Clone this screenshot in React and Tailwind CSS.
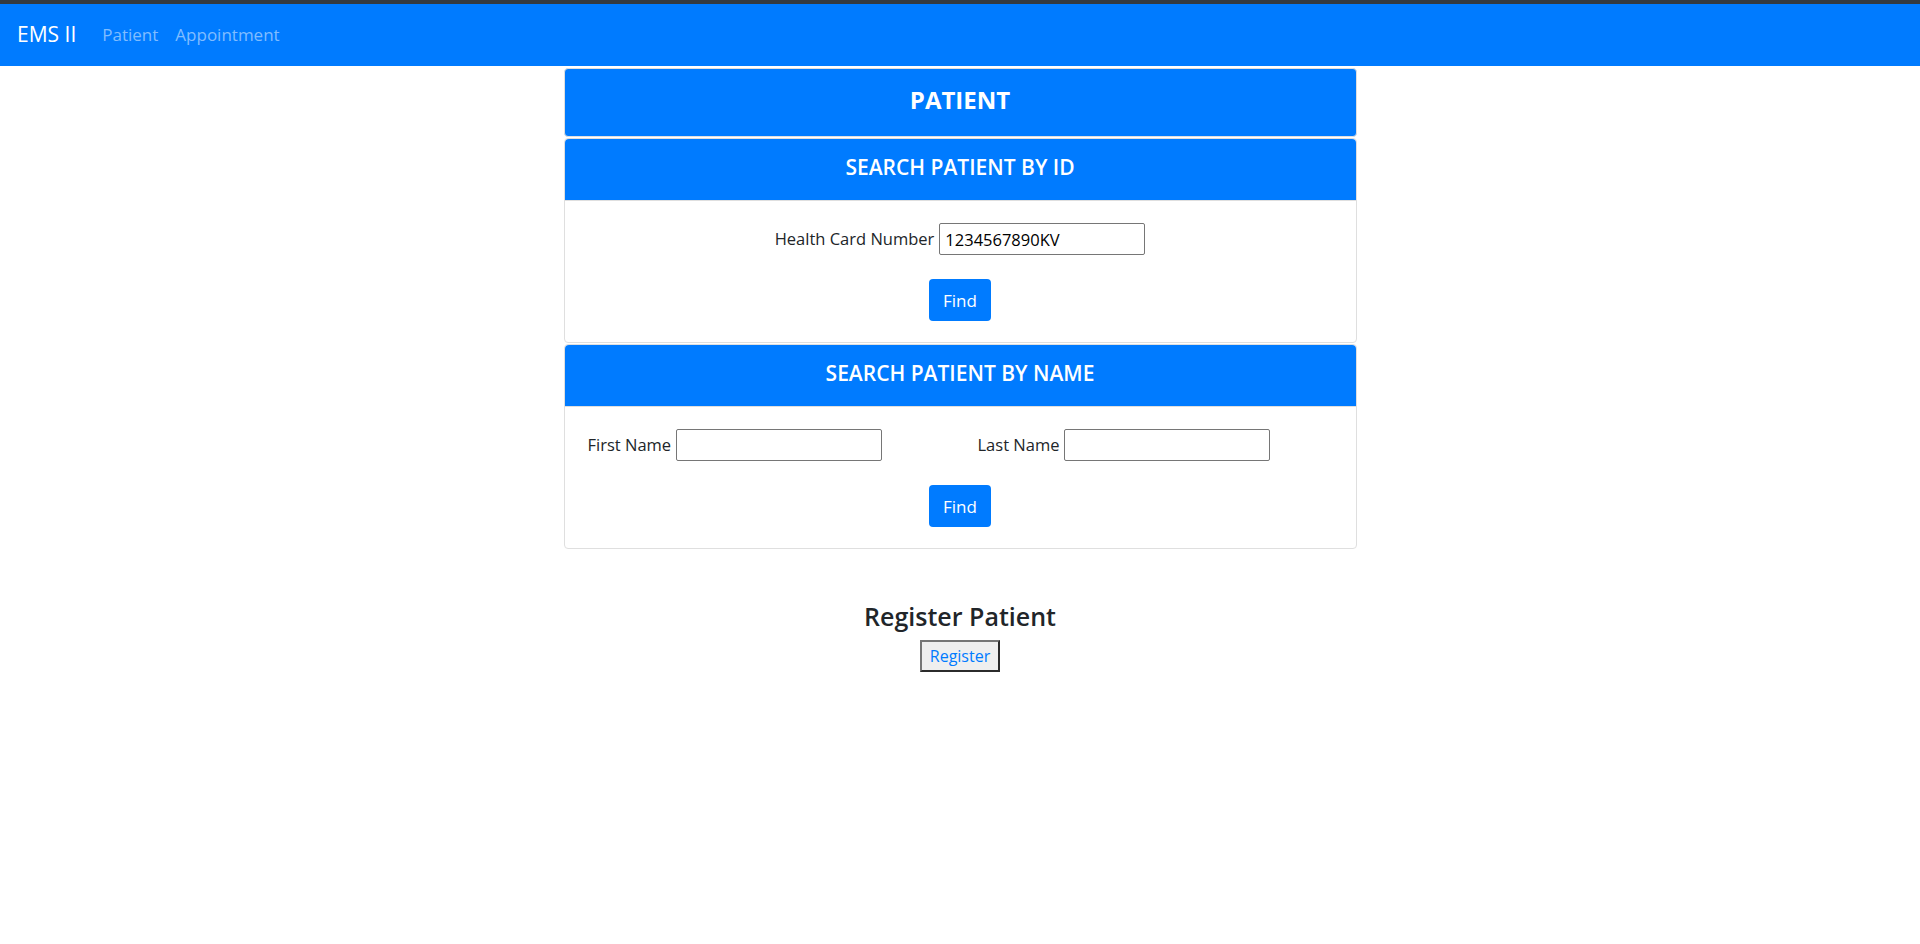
import React, { useState } from 'react';

const font = { fontFamily: '"Open Sans", "Noto Sans", "Liberation Sans", sans-serif' };

function CardHeader({ children }) {
  return (
    <div className="h-[62px] bg-[#007bff] flex items-center justify-center border-b border-[#dfdfdf] rounded-t-[4px]">
      <h5 className="text-[21px] font-semibold text-white leading-none pb-[5px]">{children}</h5>
    </div>
  );
}

function FindButton() {
  return (
    <button className="h-[42px] w-[62px] rounded-[4px] bg-[#007bff] text-white text-[17px] leading-none">
      Find
    </button>
  );
}

function TextInput({ value, onChange }) {
  return (
    <input
      type="text"
      value={value}
      onChange={(e) => onChange(e.target.value)}
      className="h-[32px] w-[206px] border border-[#767676] rounded-[2px] px-[5px] text-[16.5px] text-black outline-none"
    />
  );
}

export default function App() {
  const [healthCard, setHealthCard] = useState('1234567890KV');
  const [firstName, setFirstName] = useState('');
  const [lastName, setLastName] = useState('');

  return (
    <div className="min-h-screen bg-white text-[#212529]" style={font}>
      {/* Top bar + navbar */}
      <div className="h-[4px] bg-[#343a40]" />
      <nav className="h-[62px] bg-[#007bff] flex items-center pl-[17px]">
        <span className="text-[21px] text-white mr-[26px]">EMS II</span>
        <div className="flex gap-[17px] text-[17px] text-[#80bdff]">
          <a>Patient</a>
          <a>Appointment</a>
        </div>
      </nav>

      <div className="w-[793px] mx-auto pt-[2px] flex flex-col gap-[1px]">
        {/* Title card */}
        <div className="h-[69px] bg-[#007bff] border border-[#dfdfdf] rounded-[4px] flex items-center justify-center">
          <h3 className="text-[24px] font-bold text-white leading-none pb-[6px]">PATIENT</h3>
        </div>

        {/* Search by ID */}
        <div className="border border-[#dfdfdf] rounded-[4px]">
          <CardHeader>SEARCH PATIENT BY ID</CardHeader>
          <div className="pt-[22px] pb-[21px] flex flex-col items-center gap-[24px]">
            <div className="flex items-center gap-[5px]">
              <label className="text-[16.5px]">Health Card Number</label>
              <TextInput value={healthCard} onChange={setHealthCard} />
            </div>
            <FindButton />
          </div>
        </div>

        {/* Search by name */}
        <div className="border border-[#dfdfdf] rounded-[4px]">
          <CardHeader>SEARCH PATIENT BY NAME</CardHeader>
          <div className="pt-[22px] pb-[21px] flex flex-col gap-[24px]">
            <div className="grid grid-cols-[390px_1fr] pl-[23px]">
              <div className="flex items-center gap-[5px]">
                <label className="text-[16.5px]">First Name</label>
                <TextInput value={firstName} onChange={setFirstName} />
              </div>
              <div className="flex items-center gap-[5px]">
                <label className="text-[16.5px]">Last Name</label>
                <TextInput value={lastName} onChange={setLastName} />
              </div>
            </div>
            <div className="flex justify-center">
              <FindButton />
            </div>
          </div>
        </div>
      </div>

      {/* Register */}
      <div className="flex flex-col items-center pt-[53px]">
        <h4 className="text-[25px] font-semibold leading-[29px]">Register Patient</h4>
        <button className="mt-[9px] h-[32px] w-[80px] bg-[#efefef] border-2 border-t-[#767676] border-l-[#767676] border-r-[#2b2b2b] border-b-[#2b2b2b] text-[16px] text-[#007bff]">
          Register
        </button>
      </div>
    </div>
  );
}
